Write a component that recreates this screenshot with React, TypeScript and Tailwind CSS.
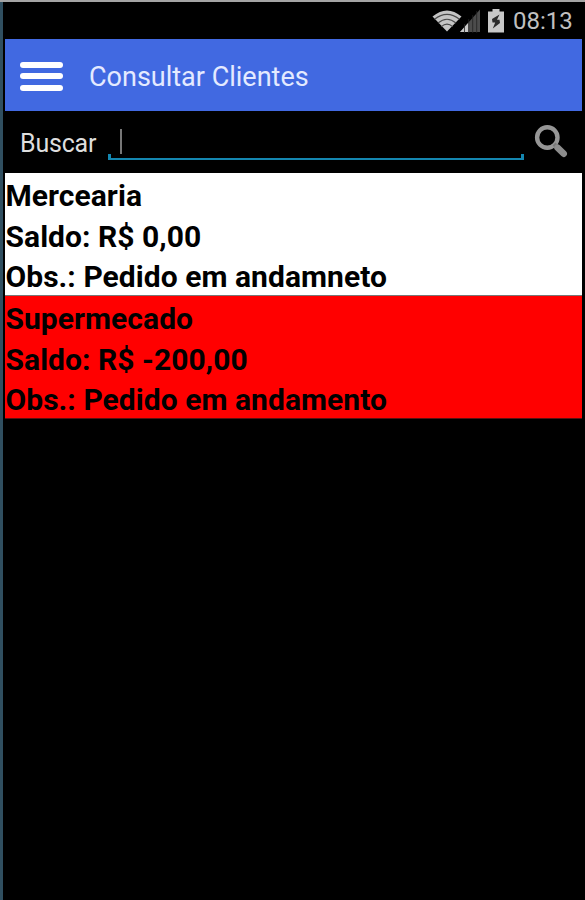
const clients = [
  { name: "Mercearia", balance: "R$ 0,00", note: "Pedido em andamneto", color: "bg-white border-[#777]" },
  { name: "Supermecado", balance: "R$ -200,00", note: "Pedido em andamento", color: "bg-[#ff0000] border-[#5a1010]" },
];

function WifiIcon() {
  return (
    <svg width="30" height="24" viewBox="0 0 30 24" fill="none">
      <path d="M0.5 7.5 Q15 -4.5 29.5 7.5 L15 22.5Z" fill="#c4c4c4" />
      <path d="M2.5 10.3 Q15 0.5 27.5 10.3 M6 14 Q15 6.5 24 14 M9.3 17.6 Q15 12.8 20.7 17.6" stroke="#4a4a4a" strokeWidth="1.2" />
    </svg>
  );
}

function SignalIcon() {
  return (
    <svg width="21" height="24" viewBox="0 0 21 24">
      <path d="M0 23 L20 0.5 V23Z" fill="#4c4c4c" />
      <path d="M0 23 L8.5 13.5 V23Z" fill="#c8c8c8" />
      <path d="M4.5 15V24 M8.7 10V24 M12.7 6V24 M16.7 2V24" stroke="#222" strokeWidth="0.8" />
    </svg>
  );
}

function BatteryIcon() {
  return (
    <svg width="16" height="24" viewBox="0 0 16 24">
      <path d="M4.5 0H11.5V2.5H16V23.5H0V2.5H4.5Z" fill="#c8c8c8" />
      <path d="M11.5 5.5 L4 10 L4.5 13.5 H7.2 L4.8 19.5 L12 14 L11.5 10.8 H9Z" fill="#2b2b2b" />
    </svg>
  );
}

function SearchIcon() {
  return (
    <svg width="34" height="35" viewBox="0 0 34 35" fill="none">
      <circle cx="13.3" cy="13.5" r="10.2" stroke="#969696" strokeWidth="4.4" />
      <path d="M20 20 L24 24" stroke="#777" strokeWidth="4" />
      <path d="M23.5 23.7 L29.7 29.7" stroke="#8c8c8c" strokeWidth="6.5" strokeLinecap="round" />
    </svg>
  );
}

function StatusBar() {
  return (
    <div className="flex h-[37px] items-center pl-[427px] text-[#c0c0c0]">
      <WifiIcon />
      <div className="-ml-[2px]">
        <SignalIcon />
      </div>
      <div className="ml-[7px]">
        <BatteryIcon />
      </div>
      <span className="ml-[9px] text-[24px] leading-none">08:13</span>
    </div>
  );
}

function Header() {
  return (
    <header className="flex h-[72px] items-center bg-[#4169e1] pt-[2px] pl-[15px]">
      <button aria-label="Menu" className="flex w-[43px] flex-col gap-[5.5px]">
        <span className="h-[6px] rounded-sm bg-white" />
        <span className="h-[6px] rounded-sm bg-white" />
        <span className="h-[6px] rounded-sm bg-white" />
      </button>
      <h1 className="ml-[26px] pt-[2px] text-[27px] leading-none whitespace-nowrap text-[#e4eaff]">Consultar Clientes</h1>
    </header>
  );
}

function SearchRow() {
  return (
    <div className="flex h-[62px] pl-[15px]">
      <label className="w-[88px] pt-[19px] text-[25px] leading-[28px] tracking-[-0.2px] text-[#dedede]">Buscar</label>
      <div className="flex h-[49px] w-[416px] flex-col justify-end">
        <div className="ml-[12px] h-[25px] w-[2px] bg-[#777]" />
        <div className="h-[6px] border-x-[3px] border-b-2 border-[#1487b0]" />
      </div>
      <div className="ml-[10px] pt-[13px]">
        <SearchIcon />
      </div>
    </div>
  );
}

export default function App() {
  return (
    <div className="h-[900px] w-[585px] overflow-hidden border-t-2 border-[#a4a4a4] bg-black font-[Roboto,sans-serif]">
      <div className="h-full border-l-[3px] border-[#304f60] pr-[3px] pl-[2px]">
        <StatusBar />
        <Header />
        <SearchRow />
        <ul>
          {clients.map((client) => (
            <li
              key={client.name}
              className={`h-[123px] border-b pt-[3px] pl-[0.5px] text-[30px] leading-[40.5px] font-bold tracking-[0.05px] whitespace-nowrap text-black ${client.color}`}
            >
              <p>{client.name}</p>
              <p>Saldo: {client.balance}</p>
              <p>Obs.: {client.note}</p>
            </li>
          ))}
        </ul>
      </div>
    </div>
  );
}
